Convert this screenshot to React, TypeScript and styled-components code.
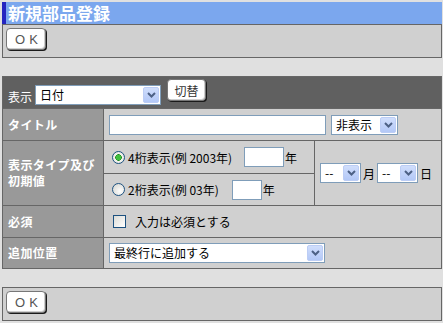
import styled, { createGlobalStyle } from 'styled-components';

const GlobalStyle = createGlobalStyle`
  html, body {
    margin: 0;
    padding: 0;
    background: #e0e0e0;
  }
  body {
    font-family: "Noto Sans CJK JP", "DejaVu Sans", sans-serif;
    font-size: 12px;
    color: #000;
  }
`;

function Chevron() {
  return (
    <svg width="9" height="6" viewBox="0 0 9 6">
      <path d="M1 1 L4.5 4.5 L8 1" fill="none" stroke="#4d6185" strokeWidth="2" />
    </svg>
  );
}

function Select({ width, value }: { width: number; value: string }) {
  return (
    <StyledSelect $width={width}>
      <SelectValue>{value}</SelectValue>
      <SelectArrow>
        <Chevron />
      </SelectArrow>
    </StyledSelect>
  );
}

function App() {
  return (
    <>
      <GlobalStyle />
      <Page>
        <Header>
          <Title>新規部品登録</Title>
        </Header>
        <ButtonBar>
          <OkButton>OK</OkButton>
        </ButtonBar>

        <FormTable>
          <colgroup>
            <col style={{ width: 101 }} />
            <col style={{ width: 211 }} />
            <col />
          </colgroup>
          <thead>
            <tr>
              <ToolbarCell colSpan={3}>
                <Toolbar>
                  <ToolbarLabel>表示</ToolbarLabel>
                  <Select width={126} value="日付" />
                  <SmallButton>切替</SmallButton>
                </Toolbar>
              </ToolbarCell>
            </tr>
          </thead>
          <tbody>
            <tr>
              <LabelCell $h={31}>タイトル</LabelCell>
              <FieldCell colSpan={2}>
                <Line $gap={5}>
                  <TextInput $width={217} />
                  <Select width={67} value="非表示" />
                </Line>
              </FieldCell>
            </tr>
            <tr>
              <LabelCell rowSpan={2}>
                表示タイプ及び
                <br />
                初期値
              </LabelCell>
              <FieldCell $h={32}>
                <Line $pad={8}>
                  <Radio $checked />
                  <Caption>4桁表示(例 2003年)</Caption>
                  <TextInput $width={40} $gap={12} />
                  <Caption>年</Caption>
                </Line>
              </FieldCell>
              <FieldCell rowSpan={2}>
                <Line $pad={5} $gap={2}>
                  <Select width={41} value="--" />
                  <Caption $gap={0}>月</Caption>
                  <Select width={41} value="--" />
                  <Caption $gap={0}>日</Caption>
                </Line>
              </FieldCell>
            </tr>
            <tr>
              <FieldCell $h={31}>
                <Line $pad={8}>
                  <Radio />
                  <Caption>2桁表示(例 03年)</Caption>
                  <TextInput $width={30} $gap={13} />
                  <Caption>年</Caption>
                </Line>
              </FieldCell>
            </tr>
            <tr>
              <LabelCell $h={31}>必須</LabelCell>
              <FieldCell colSpan={2}>
                <Line $pad={9}>
                  <CheckBox />
                  <Caption $gap={9}>入力は必須とする</Caption>
                </Line>
              </FieldCell>
            </tr>
            <tr>
              <LabelCell $h={30}>追加位置</LabelCell>
              <FieldCell colSpan={2}>
                <Line>
                  <Select width={216} value="最終行に追加する" />
                </Line>
              </FieldCell>
            </tr>
          </tbody>
        </FormTable>

        <ButtonBar $top={18}>
          <OkButton>OK</OkButton>
        </ButtonBar>
      </Page>
    </>
  );
}

export default App;

const Page = styled.div`
  width: 440px;
  padding: 2px 1px 0 2px;
`;

const Header = styled.div`
  height: 22px;
  background: #7ba7ee;
  border-left: 4px solid #2424c0;
  display: flex;
  align-items: center;
`;

const Title = styled.h1`
  margin: 0 0 0 2px;
  font-size: 17px;
  font-weight: bold;
  color: #fff;
  line-height: 22px;
`;

const ButtonBar = styled.div<{ $top?: number }>`
  margin-top: ${(p) => p.$top ?? 0}px;
  height: 34px;
  box-sizing: border-box;
  border: 1px solid #666;
  background: #d0d0d0;
  padding: 3px 0 0 3px;
`;

const OkButton = styled.button`
  width: 40px;
  height: 22px;
  padding: 0 0 0 5px;
  background: #fff;
  border: 1px solid #777;
  border-radius: 4px;
  box-shadow: 1px 1px 0 #1a1a1a, inset -1px -1px 0 #cfcfcf;
  font-family: "Liberation Sans", sans-serif;
  font-size: 13px;
  font-weight: normal;
  letter-spacing: 4px;
  color: #555;
  cursor: pointer;
`;

const SmallButton = styled(OkButton)`
  width: 39px;
  margin: 0 0 4px 6px;
  padding: 0;
  letter-spacing: 0;
  font-family: "Noto Sans CJK JP", sans-serif;
  font-size: 12px;
  color: #333;
`;

const FormTable = styled.table`
  margin-top: 18px;
  width: 440px;
  border-collapse: collapse;
  table-layout: fixed;
  background: #d0d0d0;
  border: 1px solid #666;

  td {
    border: 1px solid #666;
    padding: 0;
  }
`;

const ToolbarCell = styled.td`
  background: #606060;
  height: 31px;
  vertical-align: bottom;
`;

const Toolbar = styled.div`
  display: flex;
  align-items: flex-end;
  padding: 0 0 3px 5px;
`;

const ToolbarLabel = styled.span`
  color: #fff;
  font-size: 12px;
  line-height: 16px;
  margin-right: 3px;
`;

const LabelCell = styled.td<{ $h?: number }>`
  background: #999;
  color: #fff;
  font-weight: bold;
  font-size: 12px;
  letter-spacing: 0.4px;
  line-height: 16px;
  padding: 0 0 0 5px !important;
  height: ${(p) => (p.$h ? `${p.$h}px` : 'auto')};
`;

const FieldCell = styled.td<{ $h?: number }>`
  height: ${(p) => (p.$h ? `${p.$h}px` : 'auto')};
`;

const Line = styled.div<{ $pad?: number; $gap?: number }>`
  display: flex;
  align-items: center;
  gap: ${(p) => p.$gap ?? 0}px;
  padding-left: ${(p) => p.$pad ?? 5}px;
`;

const Caption = styled.span<{ $gap?: number }>`
  font-size: 12px;
  margin-left: ${(p) => p.$gap ?? 1}px;
  white-space: nowrap;
`;

const StyledSelect = styled.div<{ $width: number }>`
  width: ${(p) => p.$width}px;
  height: 20px;
  box-sizing: border-box;
  border: 1px solid #7f9db9;
  background: #fff;
  display: flex;
  align-items: stretch;
`;

const SelectValue = styled.span`
  flex: 1;
  padding-left: 4px;
  font-size: 12px;
  line-height: 18px;
  white-space: nowrap;
  overflow: hidden;
`;

const SelectArrow = styled.span`
  width: 16px;
  margin: 1px;
  border-radius: 2px;
  background: linear-gradient(#d0defc, #b3c8f7);
  border: 1px solid #bccdf5;
  box-sizing: border-box;
  display: flex;
  align-items: center;
  justify-content: center;
`;

const TextInput = styled.input<{ $width: number; $gap?: number }>`
  width: ${(p) => p.$width}px;
  height: 20px;
  box-sizing: border-box;
  border: 1px solid #7f9db9;
  background: #fff;
  margin: 0 0 0 ${(p) => p.$gap ?? 0}px;
  padding: 0;
`;

const Radio = styled.span<{ $checked?: boolean }>`
  width: 13px;
  height: 13px;
  box-sizing: border-box;
  border-radius: 50%;
  border: 1px solid #1c5180;
  background: ${(p) =>
    p.$checked
      ? 'radial-gradient(circle, #3fc03f 0 2.5px, #1e8a1e 3px, #f4f4f0 3.5px, #dcdcd6 100%)'
      : 'radial-gradient(circle at 65% 65%, #fff 0, #ececea 40%, #d4d4ce 100%)'};
  margin-right: 2px;
`;

const CheckBox = styled.span`
  width: 13px;
  height: 13px;
  box-sizing: border-box;
  border: 1px solid #1c5180;
  background: linear-gradient(135deg, #dcdcd7, #fff);
`;
